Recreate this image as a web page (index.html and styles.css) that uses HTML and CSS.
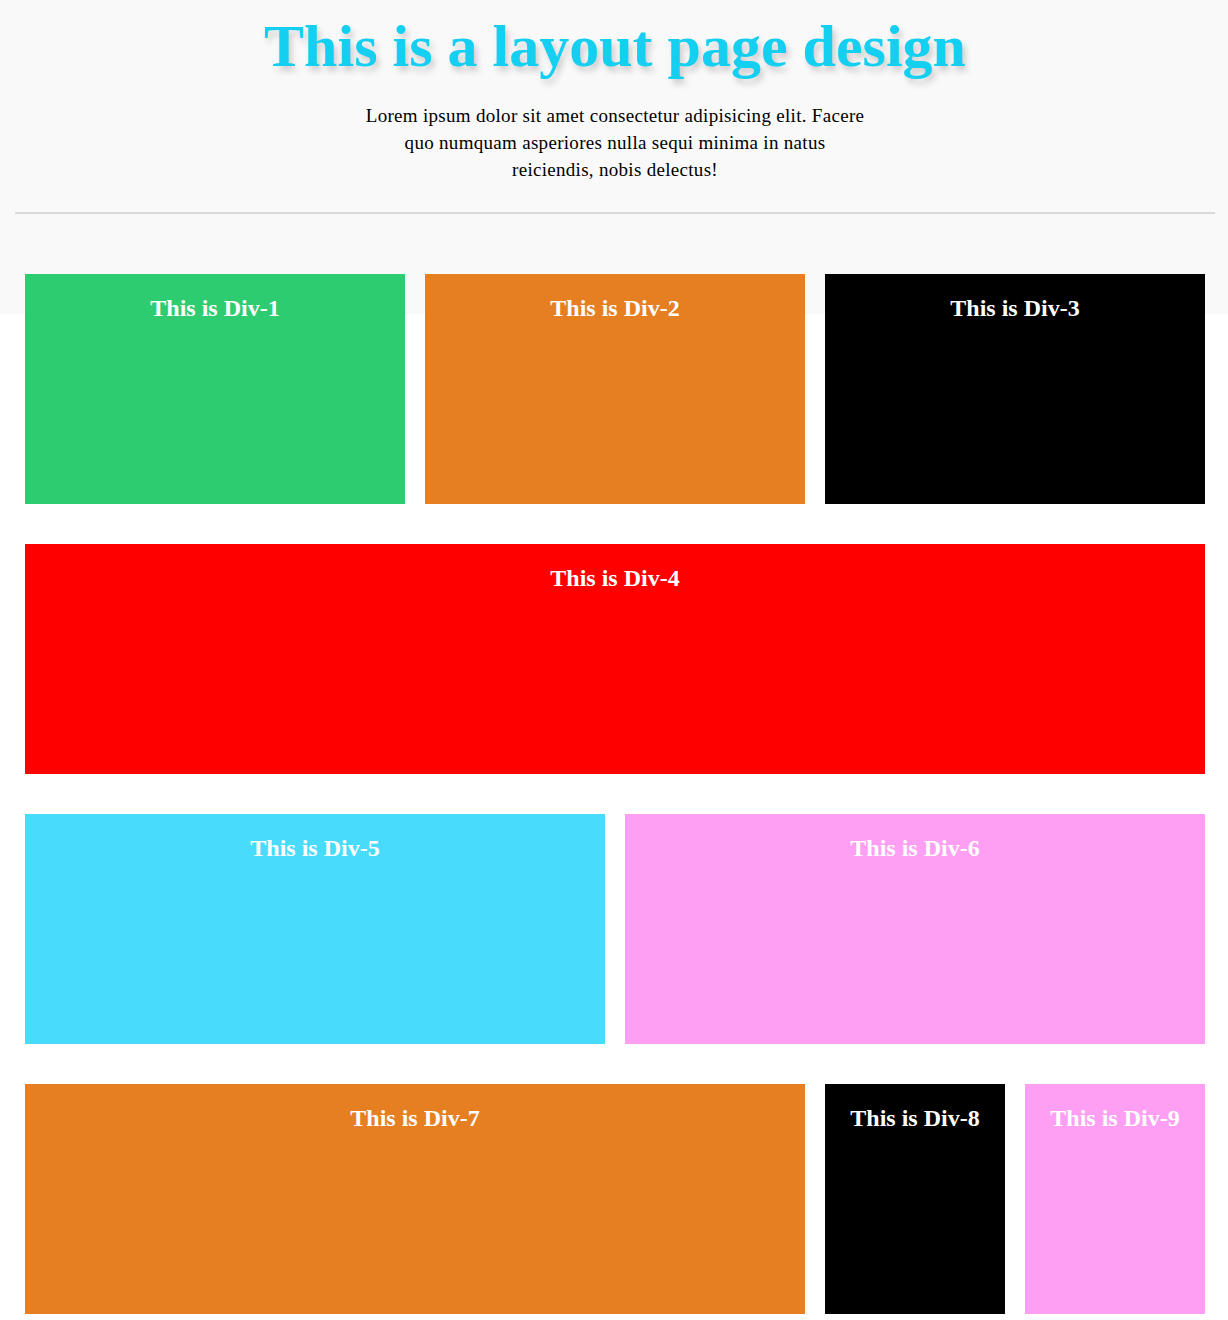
FILE: index.html
```html
<!DOCTYPE html>
<html lang="en">
<head>
<meta charset="utf-8">
<title>Layout page design</title>
<link rel="stylesheet" href="styles.css">
</head>
<body>
<header class="intro">
  <h1 class="intro-title">This is a layout page design</h1>
  <p class="intro-text">Lorem ipsum dolor sit amet consectetur adipisicing elit. Facere quo numquam asperiores nulla sequi minima in natus reiciendis, nobis delectus!</p>
  <hr class="intro-rule">
</header>
<main class="grid">
  <div class="box span-2 green"><h2 class="box-title">This is Div-1</h2></div>
  <div class="box span-2 orange"><h2 class="box-title">This is Div-2</h2></div>
  <div class="box span-2 black"><h2 class="box-title">This is Div-3</h2></div>
  <div class="box span-6 red"><h2 class="box-title">This is Div-4</h2></div>
  <div class="box span-3 cyan"><h2 class="box-title">This is Div-5</h2></div>
  <div class="box span-3 pink"><h2 class="box-title">This is Div-6</h2></div>
  <div class="box span-4 orange"><h2 class="box-title">This is Div-7</h2></div>
  <div class="box span-1 black"><h2 class="box-title">This is Div-8</h2></div>
  <div class="box span-1 pink"><h2 class="box-title">This is Div-9</h2></div>
</main>
</body>
</html>
```
FILE: styles.css
```css
html {
  background: #ffffff linear-gradient(#f9f9f9, #f9f9f9) no-repeat;
  background-size: 100% 314px;
}
body {
  margin: 0;
  font-family: "Liberation Serif", "Times New Roman", serif;
  color: #000;
}
.intro {
  display: flex;
  flex-direction: column;
  align-items: center;
  padding: 11px 13px 0 15px;
}
.intro-title {
  margin: 0;
  font-size: 60px;
  font-weight: bold;
  color: #15cff0;
  text-shadow: 3px 5px 6px rgba(0, 0, 0, 0.18);
  line-height: 71px;
}
.intro-text {
  margin: 20px 0 0;
  max-width: 500px;
  text-align: center;
  font-size: 19px;
  letter-spacing: 0.3px;
  line-height: 27px;
}
.intro-rule {
  align-self: stretch;
  margin: 29px 0 0;
  border: 0;
  height: 2px;
  background: #d9d9d9;
}
.grid {
  display: grid;
  grid-template-columns: repeat(6, 1fr);
  column-gap: 20px;
  row-gap: 40px;
  margin: 60px 23px 6px 25px;
}
.box {
  height: 230px;
  display: flex;
  flex-direction: column;
  align-items: center;
}
.box-title {
  margin: 21px 0 0;
  font-size: 24px;
  font-weight: bold;
  color: #ffffff;
  text-align: center;
}
.span-1 { grid-column: span 1; }
.span-2 { grid-column: span 2; }
.span-3 { grid-column: span 3; }
.span-4 { grid-column: span 4; }
.span-6 { grid-column: span 6; }
.green { background: #2ecc71; }
.orange { background: #e67e22; }
.black { background: #000000; }
.red { background: #ff0000; }
.cyan { background: #48dbfb; }
.pink { background: #ff9ff3; }
```
